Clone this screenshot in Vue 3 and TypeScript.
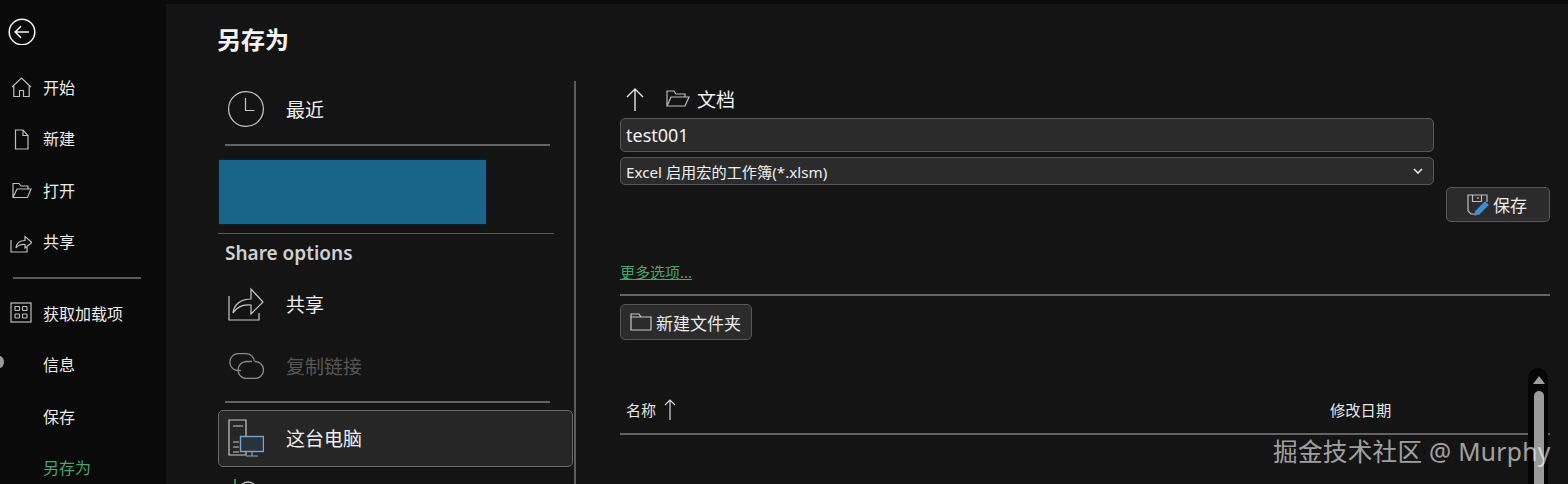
<script setup lang="ts">
const topItems = [
  { label: '开始', icon: 'home' },
  { label: '新建', icon: 'file' },
  { label: '打开', icon: 'open' },
  { label: '共享', icon: 'share' },
]
const lowerItems = [
  { label: '获取加载项', icon: 'grid' },
  { label: '信息', icon: '' },
  { label: '保存', icon: '' },
  { label: '另存为', icon: '', active: true },
]
</script>

<template>
  <div class="backstage">
    <aside class="side">
      <div class="side-back">
        <svg width="28" height="28" viewBox="0 0 28 28" fill="none" stroke="#f2f2f2" stroke-width="1.500">
          <circle cx="14" cy="15" r="12.800" />
          <path d="M21 15H7.500M13 9.200 7.200 15l5.800 5.800" stroke-width="1.600" />
        </svg>
      </div>
      <div v-for="item in topItems" :key="item.label" class="side-item">
        <svg class="side-icon" width="22" height="22" viewBox="0 0 22 22" fill="none" stroke="#bdbdbd" stroke-width="1.200">
          <path v-if="item.icon === 'home'" d="M2 11 11.500 2 21 11M3.800 10v10.500h5.700v-6h4v6h5.700V10" />
          <path v-if="item.icon === 'file'" d="M5.500 2h7.500l5 5.500v13.500H5.500zM13 2v5.500h5" />
          <path v-if="item.icon === 'open'" d="M3 18.500V4.500h6l2 2.500h7v3M3 18.500l4-8.500h14l-3.500 8.500z" />
          <path v-if="item.icon === 'share'" d="M1 9v12h16v-5M6 17c.5-5 4-7.500 9-7.500V5.500l7 6-7 5.500v-3.500c-4-.3-7 .6-9 3.500z" />
        </svg>
        <span>{{ item.label }}</span>
      </div>
      <div class="side-line"></div>
      <div v-for="item in lowerItems" :key="item.label" class="side-item" :class="{ active: item.active }">
        <svg v-if="item.icon === 'grid'" class="side-icon" width="22" height="22" viewBox="0 0 22 22" fill="none" stroke="#bdbdbd" stroke-width="1.200">
          <rect x="1" y="1" width="20" height="19" />
          <rect x="5" y="4.500" width="4.500" height="4" rx=".8" />
          <rect x="12.500" y="4.500" width="4.500" height="4" rx=".8" />
          <rect x="5" y="12" width="4.500" height="4" rx=".8" />
          <rect x="12.500" y="12" width="4.500" height="4" rx=".8" />
        </svg>
        <span>{{ item.label }}</span>
      </div>
      <div class="side-dot"></div>
    </aside>

    <main class="main">
      <h1 class="title">另存为</h1>
      <div class="columns">
        <section class="places">
          <div class="place place-recent">
            <svg width="36" height="36" viewBox="0 0 36 36" fill="none" stroke="#c8c8c8" stroke-width="1.200">
              <circle cx="18" cy="18" r="17.400" />
              <path d="M17.500 7v12.500h9" />
            </svg>
            <span>最近</span>
          </div>
          <div class="rule"></div>
          <div class="redacted"></div>
          <div class="thin-rule"></div>
          <h2 class="share-head">Share options</h2>
          <div class="place place-share">
            <svg width="36" height="36" viewBox="0 0 36 36" fill="none" stroke="#c8c8c8" stroke-width="1.200">
              <path d="M1 10v24h30v-7M5 27c1-8 7-14 18-14V3l12 13-12 12V19c-8-1-14 2-18 8z" />
            </svg>
            <span>共享</span>
          </div>
          <div class="place place-copy">
            <svg width="36" height="26" viewBox="0 0 36 26" fill="none" stroke="#8a8a8a" stroke-width="1.300">
              <path d="M13 17.500H9A8.500 8.500 0 0 1 9 .7h9a8.500 8.500 0 0 1 8.500 7.800" />
              <path d="M27 8.500a8.500 8.500 0 0 1 0 17H18.500a8.500 8.500 0 0 1 0-17H24" />
            </svg>
            <span>复制链接</span>
          </div>
          <div class="rule rule-low"></div>
          <div class="place place-pc">
            <svg width="36" height="38" viewBox="0 0 36 38" fill="none" stroke-width="1.200">
              <path d="M18 33v3H1V1h17v16M5 7h10M5 23h6M5 28h6M5 33h6" stroke="#c8c8c8" />
              <rect x="12.500" y="17.500" width="23" height="15" fill="#27343f" stroke="#6fa8d4" stroke-width="1.400" />
              <path d="M24 32.500v4.500M18 37h12" stroke="#6fa8d4" />
            </svg>
            <span>这台电脑</span>
          </div>
          <div class="place-next">
            <svg width="36" height="12" viewBox="0 0 36 12" fill="none" stroke-width="1.300">
              <path d="M1 0v8" stroke="#5fbf7a" />
              <circle cx="14" cy="12" r="9" stroke="#c8c8c8" />
            </svg>
          </div>
        </section>

        <section class="saver">
          <div class="crumbs">
            <svg width="20" height="24" viewBox="0 0 20 24" fill="none" stroke="#e6e6e6" stroke-width="1.400">
              <path d="M10 24V2M2 10l8-8 8 8" />
            </svg>
            <svg class="crumb-folder" width="24" height="20" viewBox="0 0 24 20" fill="none" stroke="#bdbdbd" stroke-width="1.200">
              <path d="M1 17V2h7l2 3h9v3M1 17l4-9h18l-4 9z" />
            </svg>
            <span>文档</span>
          </div>
          <div class="field field-name">test001</div>
          <div class="field field-type">
            <span>Excel 启用宏的工作簿(*.xlsm)</span>
            <svg width="10" height="6" viewBox="0 0 10 6" fill="none" stroke="#eaeaea" stroke-width="1.600">
              <path d="M1 1l4 4 4-4" />
            </svg>
          </div>
          <div class="save-row">
            <button class="btn btn-save">
              <svg width="22" height="22" viewBox="0 0 22 22" fill="none" stroke="#bdbdbd" stroke-width="1.200">
                <path d="M8 20H4l-3-3V1h19v7" />
                <path d="M5.500 1v6.500h9V1M11 3v2" />
                <path d="M8 21l1-4 9-9 3 3-9 9z" fill="#3f8fd0" stroke="#3f8fd0" />
              </svg>
              <span>保存</span>
            </button>
          </div>
          <a class="more">更多选项...</a>
          <div class="rule rule-full"></div>
          <button class="btn btn-folder">
            <svg width="22" height="18" viewBox="0 0 22 18" fill="none" stroke="#c8c8c8" stroke-width="1.200">
              <path d="M1 17V1h8l2 3h10v13zM1 4h10" />
            </svg>
            <span>新建文件夹</span>
          </button>
          <div class="list-head">
            <span class="col-name">名称</span>
            <svg width="12" height="22" viewBox="0 0 12 22" fill="none" stroke="#d8d8d8" stroke-width="1.200">
              <path d="M6 22V2M1 7l5-5 5 5" />
            </svg>
            <span class="col-date">修改日期</span>
          </div>
          <div class="rule rule-full"></div>
        </section>
      </div>
    </main>

    <div class="scrollbar">
      <i class="scroll-up"></i>
      <i class="scroll-thumb"></i>
    </div>
    <div class="watermark">掘金技术社区 @ Murphy</div>
  </div>
</template>

<style>
html,
body {
  margin: 0;
  background: #141414;
  overflow: hidden;
}
</style>

<style scoped>
.backstage {
  position: relative;
  display: flex;
  width: 1568px;
  height: 484px;
  overflow: hidden;
  background: #141414;
  color: #f0f0f0;
  font-family: "Noto Sans", "Noto Sans CJK SC", sans-serif;
}

.side {
  position: relative;
  flex: 0 0 166px;
  background: #0a0a0a;
  font-size: 16px;
}

.side-back {
  display: flex;
  height: 61px;
  padding: 17px 0 0 8px;
  box-sizing: border-box;
}

.side-item {
  position: relative;
  display: flex;
  align-items: center;
  height: 51.500px;
  padding-left: 43px;
  color: #ececec;
}

.side-item.active {
  color: #4aa56a;
}

.side-icon {
  position: absolute;
  left: 10px;
  top: 15px;
}

.side-line {
  height: 2px;
  margin: 10px 25px 8px 13px;
  background: #5a5a5a;
}

.side-dot {
  position: absolute;
  left: -5px;
  top: 356px;
  width: 9px;
  height: 12px;
  border-radius: 50%;
  background: #9a9a9a;
}

.main {
  flex: 1;
  padding-left: 51px;
  border-top: 4px solid #0a0a0a;
}

.title {
  height: 77px;
  margin: 0;
  font-size: 24px;
  font-weight: 700;
  line-height: 72px;
  color: #f5f5f5;
}

.columns {
  display: flex;
}

.places {
  flex: 0 0 357px;
  height: 403px;
  border-right: 2px solid #5c5c5c;
}

.place {
  display: flex;
  align-items: center;
  font-size: 19px;
  color: #f0f0f0;
}

.place span {
  margin-left: 22px;
}

.place svg {
  margin-left: 11px;
}

.place-recent {
  height: 56px;
  margin-bottom: 7px;
}

.rule {
  height: 2px;
  background: #636363;
}

.places .rule {
  width: 325px;
  margin-left: 8px;
}

.redacted {
  width: 267px;
  height: 64px;
  margin: 14px 0 9px 2px;
  background: #186488;
  box-shadow: 0 0 3px #0c2c40;
}

.thin-rule {
  width: 336px;
  height: 1px;
  margin-left: 1px;
  background: #585858;
}

.share-head {
  margin: 6px 0 0 8px;
  font-size: 19px;
  font-weight: 600;
  line-height: 26px;
  color: #d0d0d0;
}

.place-share {
  height: 56px;
  margin-top: 10px;
}

.place-copy {
  height: 56px;
  margin-top: 6px;
}

.place-copy span {
  color: #565656;
}

.places .rule-low {
  margin-top: 7px;
}

.place-pc {
  box-sizing: border-box;
  width: 355px;
  height: 57px;
  margin: 7px 0 0 1px;
  padding-bottom: 2px;
  border: 1px solid #6a6a6a;
  border-radius: 5px;
  background: #262626;
}

.place-pc svg {
  margin-left: 9px;
}

.place-next {
  padding: 12px 0 0 17px;
}

.place-next svg {
  display: block;
}

.saver {
  display: flex;
  flex-direction: column;
  width: 930px;
  margin-left: 44px;
}

.crumbs {
  display: flex;
  align-items: center;
  box-sizing: border-box;
  height: 37px;
  padding: 0 0 2px 5px;
  font-size: 19px;
}

.crumb-folder {
  margin: 0 7px 0 21px;
}

.field {
  box-sizing: border-box;
  display: flex;
  align-items: center;
  justify-content: space-between;
  width: 814px;
  padding: 0 10px 0 5px;
  border: 1px solid #585858;
  border-radius: 5px;
  background: #2b2b2b;
}

.field-name {
  height: 34px;
  font-size: 18px;
}

.field-type {
  height: 28px;
  margin-top: 5px;
  font-size: 15.200px;
}

.save-row {
  display: flex;
  justify-content: flex-end;
  height: 35px;
  margin-top: 2px;
}

.btn {
  display: flex;
  align-items: center;
  box-sizing: border-box;
  padding: 0;
  border: 1px solid #585858;
  border-radius: 5px;
  background: #2b2b2b;
  color: #ececec;
  font-family: inherit;
}

.btn-save {
  width: 104px;
  height: 35px;
  padding-left: 20px;
  font-size: 17px;
  gap: 4px;
}

.more {
  margin-top: 39px;
  font-size: 15px;
  line-height: 22px;
  color: #4aa56a;
  text-decoration: underline;
}

.more + .rule-full {
  margin-top: 11px;
}

.btn-folder {
  width: 132px;
  height: 36px;
  margin-top: 8px;
  padding-left: 9px;
  font-size: 17px;
  gap: 4px;
}

.list-head {
  display: flex;
  align-items: center;
  height: 48px;
  margin-top: 45px;
  padding-left: 6px;
  font-size: 15px;
  color: #e6e6e6;
}

.list-head svg {
  margin-left: 8px;
}

.col-date {
  position: absolute;
  left: 1330px;
  font-size: 15.300px;
}

.scrollbar {
  position: absolute;
  left: 1528px;
  top: 368px;
  bottom: 0;
  width: 20px;
  border-radius: 10px 10px 0 0;
  background: #050505;
}

.scroll-up {
  position: absolute;
  left: 5px;
  top: 8px;
  width: 0;
  height: 0;
  border: 6px solid transparent;
  border-top: 0;
  border-bottom: 8px solid #9c9c9c;
}

.scroll-thumb {
  position: absolute;
  left: 6px;
  top: 23px;
  bottom: 0;
  width: 10px;
  border-radius: 5px 5px 0 0;
  background: #9a9a9a;
}

.watermark {
  position: absolute;
  left: 1273px;
  top: 435px;
  font-size: 24.600px;
  line-height: 34px;
  letter-spacing: .3px;
  white-space: nowrap;
  color: rgba(255, 255, 255, .62);
}
</style>
